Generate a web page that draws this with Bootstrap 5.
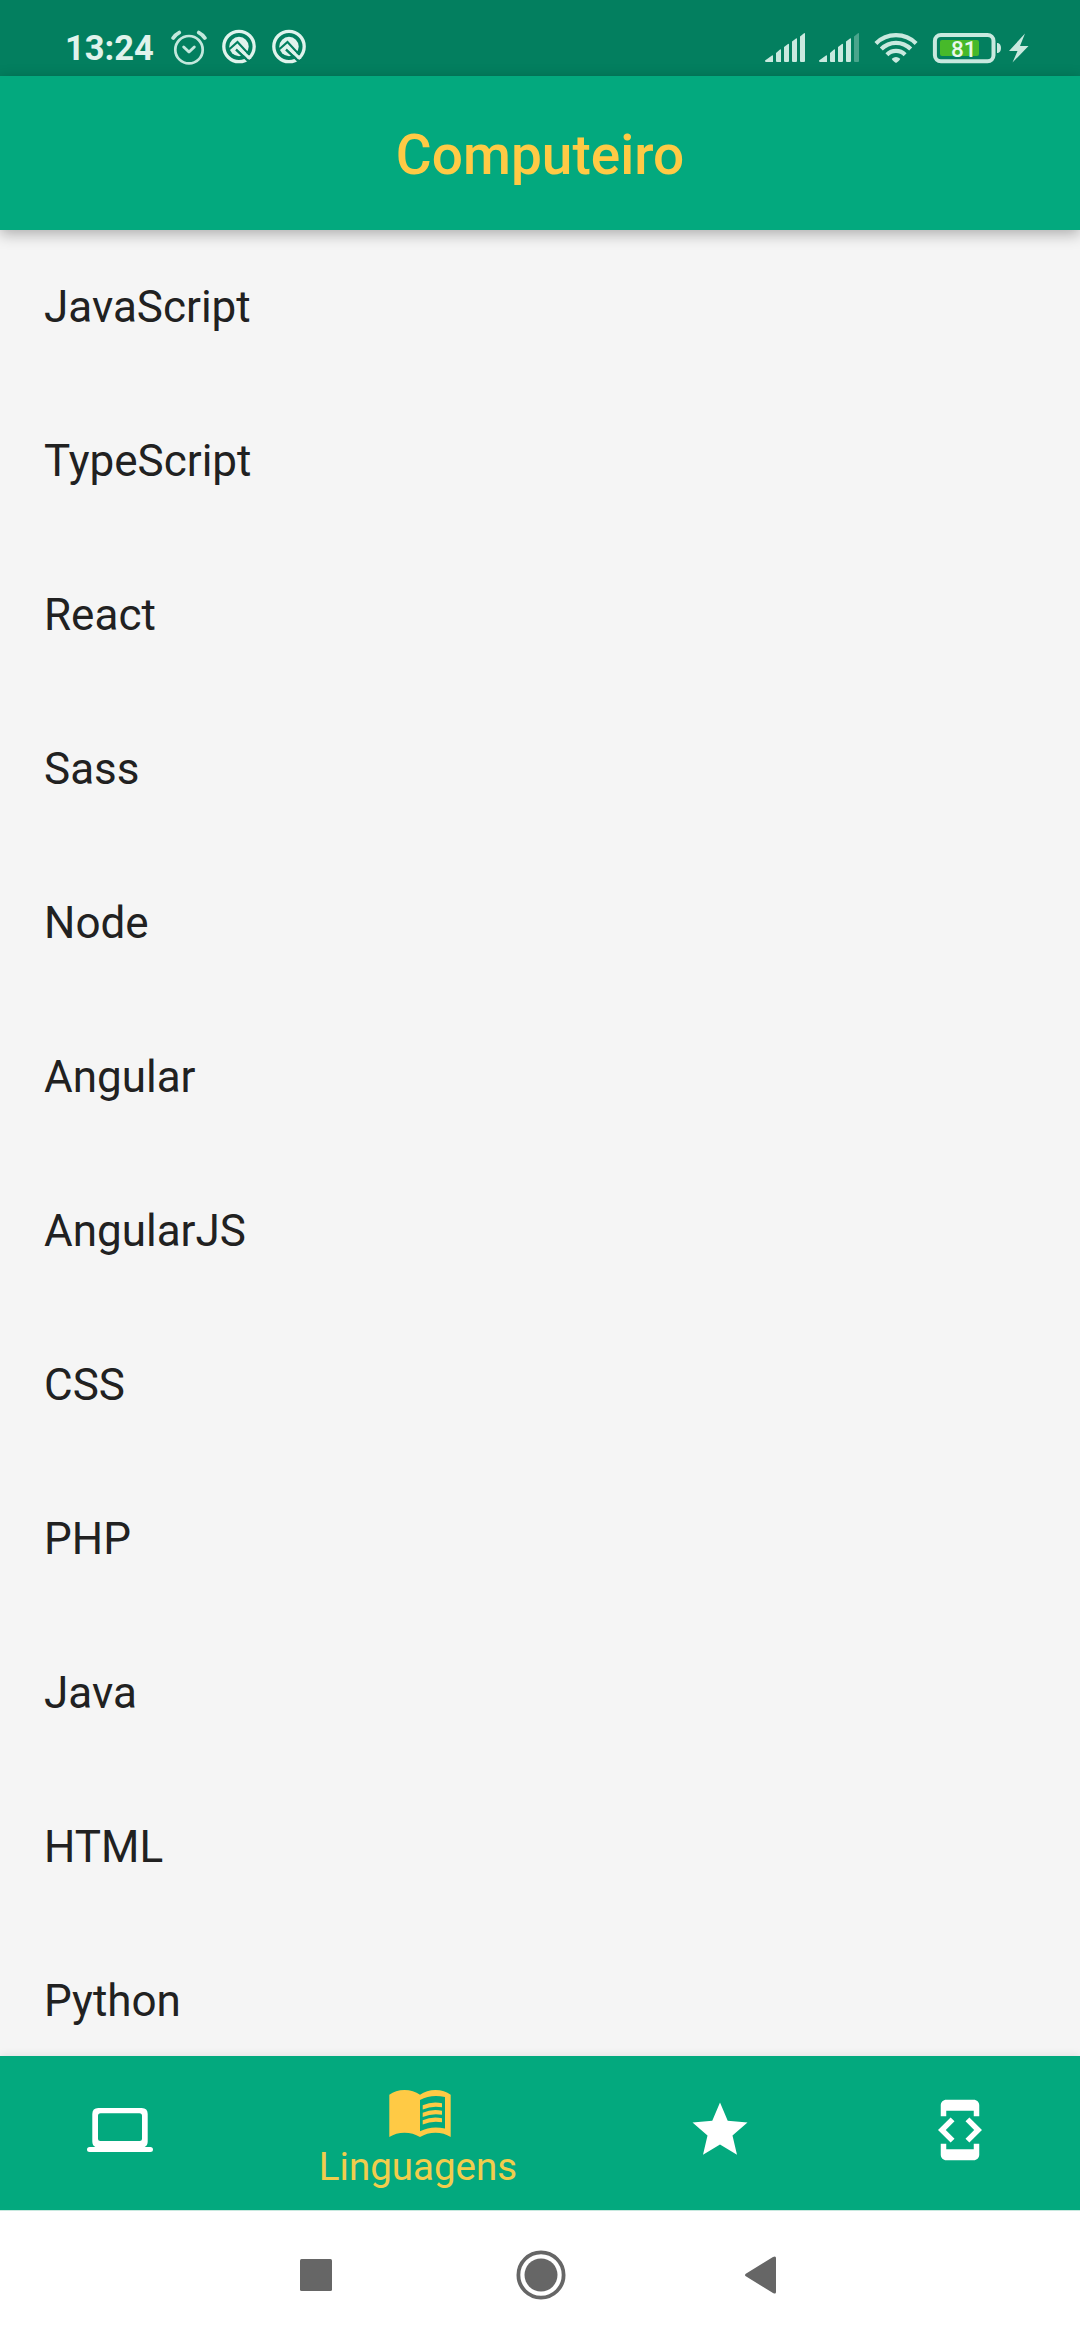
<!DOCTYPE html>
<html lang="pt-BR">
<head>
<meta charset="utf-8">
<meta name="viewport" content="width=device-width, initial-scale=1">
<title>Computeiro</title>
<link href="https://cdn.jsdelivr.net/npm/bootstrap@5.3.0/dist/css/bootstrap.min.css" rel="stylesheet">
<style>
  body { font-family: Roboto, "Noto Sans", sans-serif; background: #f5f5f5; }
  svg { display: block; flex: none; }
  .screen { width: 1080px; height: 2340px; }
  .statusbar { height: 76px; background: #037f5f; color: #e0f3ec; padding: 20px 51px 0 65px; }
  .clock { font-size: 34.5px; font-weight: 700; line-height: 56px; width: 106px; }
  .appbar { height: 154px; background: #03a97e; box-shadow: 0 4px 14px rgba(0,0,0,.3); z-index: 2; }
  .appbar h1 { font-size: 55px; font-weight: 500; color: #ffca45; line-height: 64px; padding-top: 3px; }
  .langs { height: 1826px; }
  .langs .list-group-item { height: 154px; padding: 0 44px; font-size: 44px; line-height: 52px; color: #212121; background: #f5f5f5; }
  .tabs { height: 154px; background: #03a97e; color: #fff; box-shadow: 0 0 9px rgba(0,0,0,.1); z-index: 2; }
  .tab { width: 240px; padding-top: 41px; }
  .tab.current { width: 360px; padding-top: 24px; color: #ffca45; }
  .tab span { font-size: 38.5px; line-height: 42px; color: #f2cd4c; }
  .sysnav { height: 130px; background: #fff; color: #666; padding: 0 304px 0 300px; border-top: 1px solid #c8e9df; z-index: 3; }
  .sysnav svg { margin-top: -1px; }
</style>
<script src="https://cdn.jsdelivr.net/npm/bootstrap@5.3.0/dist/js/bootstrap.bundle.min.js"></script>
</head>
<body>
<div class="screen d-flex flex-column overflow-hidden">
  <header class="statusbar d-flex justify-content-between flex-shrink-0">
    <div class="d-flex">
      <div class="clock">13:24</div>
      <!-- alarm and notification icons -->
      <svg width="140" height="56" viewBox="171 20 140 56" fill="none" stroke="#c3e8dd">
        <circle cx="189" cy="49.700" r="13.700" stroke-width="2.700"/>
        <path d="M183.700 47l5.300 5 5.300-5" stroke-width="2.900" stroke-linecap="round" stroke-linejoin="round"/>
        <path d="M173.200 38q2-3.300 6-5.400M204.800 38q-2-3.300-6-5.400" stroke-width="3.800" stroke-linecap="round"/>
        <g id="disc">
          <circle cx="239" cy="46.500" r="15.200" stroke="#e0f3ec" stroke-width="3.300"/>
          <circle cx="239" cy="46.500" r="9.700" fill="#e0f3ec" stroke="none"/>
          <path d="M229 49.500l8.500-7.500L249.500 55" stroke="#037f5f" stroke-width="2.100"/>
          <path d="M236 49.500L249.500 62" stroke="#037f5f" stroke-width="2.400"/>
          <path d="M236.500 46l12.500 12" stroke="#e0f3ec" stroke-width="3"/>
          <path d="M243 51.500l8 7" stroke="#e0f3ec" stroke-width="1.500"/>
        </g>
        <use href="#disc" x="50"/>
      </svg>
    </div>
    <!-- signal, wifi, battery -->
    <svg width="264" height="56" viewBox="765 20 264 56" fill="#c9e9df">
      <path id="bars" d="M765 60.500l7-5q1-.7 1 .4V62h-7q-1 0-1-1.500zM776 53l4-3.500q1-.6 1 .4V62h-4q-1 0-1-1zM784 47l4-3q1-.6 1 .4V61q0 1-1 1h-3q-1 0-1-1zM792 41.500l4-3q1-.6 1 .4V61q0 1-1 1h-3q-1 0-1-1z"/>
      <path id="bar5" d="M800 36.500l4-3.300q1-.6 1 .4V61q0 1-1 1h-3q-1 0-1-1z"/>
      <use href="#bars" x="54"/><use href="#bar5" x="54" opacity=".36"/>
      <g fill="none" stroke="#c9e9df" stroke-width="4.200">
        <path d="M875.900 43.400A28.500 28.500 0 0 1 916.100 43.400"/>
        <path d="M881.300 49A20.500 20.500 0 0 1 910.700 49"/>
        <path d="M886.900 54.700A12.900 12.900 0 0 1 905.100 54.700"/>
      </g>
      <path d="M891.800 58.800q4.200-3.800 8.400 0q0 1.400-4.200 4.200q-4.200-2.800-4.200-4.200z"/>
      <rect x="934.900" y="34.900" width="58.600" height="26.400" rx="6" fill="none" stroke="#c9e9df" stroke-width="4"/>
      <rect x="940" y="40" width="39" height="16" rx="2" fill="#47b92a"/>
      <path d="M997 43h1q3 1 3 5t-3 5h-1z"/>
      <text x="963.700" y="56.800" text-anchor="middle" font-family="Roboto, sans-serif" font-weight="500" font-size="22.500" fill="#e9f8ee">81</text>
      <path d="M1025 33.500L1009 51h8.500l-5 11.500L1028.500 46H1020z"/>
    </svg>
  </header>

  <nav class="appbar d-flex align-items-center justify-content-center position-relative flex-shrink-0">
    <h1 class="m-0">Computeiro</h1>
  </nav>

  <ul class="langs list-group list-group-flush overflow-hidden flex-shrink-0">
    <li class="list-group-item border-0 d-flex align-items-center flex-shrink-0">JavaScript</li>
    <li class="list-group-item border-0 d-flex align-items-center flex-shrink-0">TypeScript</li>
    <li class="list-group-item border-0 d-flex align-items-center flex-shrink-0">React</li>
    <li class="list-group-item border-0 d-flex align-items-center flex-shrink-0">Sass</li>
    <li class="list-group-item border-0 d-flex align-items-center flex-shrink-0">Node</li>
    <li class="list-group-item border-0 d-flex align-items-center flex-shrink-0">Angular</li>
    <li class="list-group-item border-0 d-flex align-items-center flex-shrink-0">AngularJS</li>
    <li class="list-group-item border-0 d-flex align-items-center flex-shrink-0">CSS</li>
    <li class="list-group-item border-0 d-flex align-items-center flex-shrink-0">PHP</li>
    <li class="list-group-item border-0 d-flex align-items-center flex-shrink-0">Java</li>
    <li class="list-group-item border-0 d-flex align-items-center flex-shrink-0">HTML</li>
    <li class="list-group-item border-0 d-flex align-items-center flex-shrink-0">Python</li>
  </ul>

  <nav class="tabs d-flex position-relative flex-shrink-0">
    <div class="tab d-flex flex-column align-items-center">
      <svg width="66" height="66" viewBox="0 0 66 66" fill="currentColor"><path fill-rule="evenodd" d="M11.300 11h43.400q6 0 6 6v27.500q0 4-3 5.500h5.600q2.700 0 2.700 2.500T63.300 55H2.700Q0 55 0 52.500T2.700 50h5.600q-3-1.500-3-5.500V17q0-6 6-6zM13.500 16.300q-2.500 0-2.500 2.500v22.700q0 2.500 2.500 2.500h39q2.500 0 2.500-2.500V18.800q0-2.500-2.500-2.500z"/></svg>
    </div>
    <div class="tab current d-flex flex-column align-items-center">
      <svg width="66" height="66" viewBox="0 0 66 66" fill="currentColor"><path fill-rule="evenodd" d="M2.300 14.700Q8.500 10 17.500 10T33 14.700Q39.500 10 48.500 10T63.700 14.700V57Q57 52.700 48.500 52.700T33 57Q26 52.700 17.500 52.700T2.300 57zM33 20V51.300Q44 45.500 58 48.500V17Q44 14 33 20z"/><path d="M35.700 25.300Q45 21 55 23.200v4.100Q45 25.500 35.700 29.500zM35.700 32.800Q45 28.500 55 30.700v4.100Q45 33 35.700 37zM35.700 40.300Q45 36 55 38.200v4.100Q45 40.500 35.700 44.500z"/></svg>
      <span class="pe-1">Linguagens</span>
    </div>
    <div class="tab d-flex flex-column align-items-center">
      <svg width="66" height="66" viewBox="0 0 24 24" fill="currentColor"><path d="M12 17.270L18.180 21l-1.640-7.030L22 9.240l-7.190-.61L12 2 9.190 8.630 2 9.240l5.460 4.730L5.820 21z"/></svg>
    </div>
    <div class="tab d-flex flex-column align-items-center">
      <svg width="66" height="66" viewBox="0 0 24 24" fill="currentColor"><path d="M7 5h10v2h2V3c0-1.100-.9-1.990-2-1.990L7 1c-1.100 0-2 .9-2 2v4h2V5zm8.410 11.590L20 12l-4.590-4.590L14 8.830 17.170 12 14 15.170l1.410 1.420zM10 15.170L6.830 12 10 8.830 8.590 7.410 4 12l4.590 4.590L10 15.170zM17 19H7v-2H5v4c0 1.100.9 2 2 2h10c1.100 0 2-.9 2-2v-4h-2v2z"/></svg>
    </div>
  </nav>

  <footer class="sysnav d-flex align-items-center justify-content-between position-relative flex-shrink-0">
    <svg width="32" height="50" viewBox="0 0 32 50" fill="currentColor"><rect y="9" width="32" height="32" rx="1.500"/></svg>
    <svg class="ms-1" width="50" height="50" viewBox="0 0 50 50" fill="currentColor"><circle cx="25" cy="25" r="22.600" fill="none" stroke="currentColor" stroke-width="3.800"/><circle cx="25" cy="25" r="16.500"/></svg>
    <svg width="31" height="50" viewBox="0 0 31 50" fill="currentColor"><path d="M.8 23.700L28 7q3-1.500 3 1v34q0 2.500-3 1L.8 26.300q-1.600-1.300 0-2.600z"/></svg>
  </footer>
</div>
</body>
</html>
